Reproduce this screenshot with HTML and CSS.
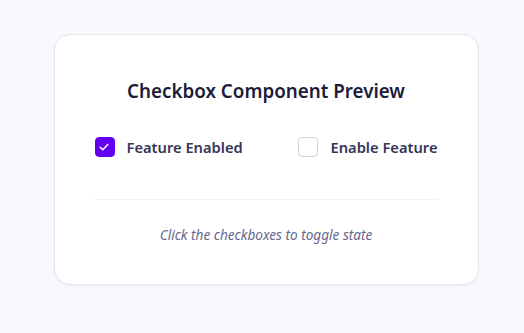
FILE: index.html
```html
<!DOCTYPE html>
<html lang="en">
<head>
<meta charset="utf-8">
<title>Checkbox Component Preview</title>
<link rel="stylesheet" href="styles.css">
</head>
<body>
<main class="page">
  <section class="card">
    <h1 class="title">Checkbox Component Preview</h1>
    <div class="options">
      <label class="option">
        <span class="box box-checked">
          <svg viewBox="0 0 20 20" width="20" height="20" aria-hidden="true"><path d="M6.2 10.3l2.6 2.5L13.8 7.6" fill="none" stroke="#fff" stroke-width="1.5" stroke-linecap="round" stroke-linejoin="round"/></svg>
        </span>
        <span class="label">Feature Enabled</span>
      </label>
      <label class="option">
        <span class="box"></span>
        <span class="label">Enable Feature</span>
      </label>
    </div>
    <hr class="divider">
    <p class="hint">Click the checkboxes to toggle state</p>
  </section>
</main>
</body>
</html>
```
FILE: styles.css
```css
* { box-sizing: border-box; }
html, body { margin: 0; padding: 0; }
body {
  background: #f8f9fc;
  font-family: "Noto Sans", "Open Sans", sans-serif;
  width: 524px;
  height: 333px;
}
.page {
  padding-top: 34px;
  padding-left: 8px;
  display: flex;
  justify-content: center;
}
.card {
  width: 425px;
  height: 251px;
  background: #ffffff;
  border: 1px solid #e4e5f0;
  border-radius: 16px;
  padding: 42px 40px 40px;
  box-shadow: 0 1px 3px rgba(30, 30, 80, 0.05);
  display: flex;
  flex-direction: column;
}
.title {
  margin: 0;
  font-size: 18.8px;
  line-height: 28px;
  font-weight: 600;
  color: #1c1c3a;
  text-align: center;
}
.options {
  margin-top: 32px;
  display: flex;
  justify-content: space-between;
  align-items: center;
}
.option {
  display: flex;
  align-items: center;
  gap: 12px;
}
.box {
  width: 20px;
  height: 20px;
  border: 1.5px solid #cdd3e3;
  border-radius: 4px;
  background: #fff;
  display: flex;
}
.box-checked {
  background: #6300f0;
  border-color: #6300f0;
}
.box-checked svg { margin: -1.5px; }
.label {
  font-size: 14.7px;
  line-height: 20px;
  font-weight: 600;
  color: #36365a;
}
.divider {
  margin: 42px 0 0;
  border: 0;
  border-top: 1px solid #f0f0f5;
}
.hint {
  margin: 25px 0 0;
  font-size: 13.6px;
  line-height: 20px;
  font-style: italic;
  color: #66688c;
  text-align: center;
}
```
